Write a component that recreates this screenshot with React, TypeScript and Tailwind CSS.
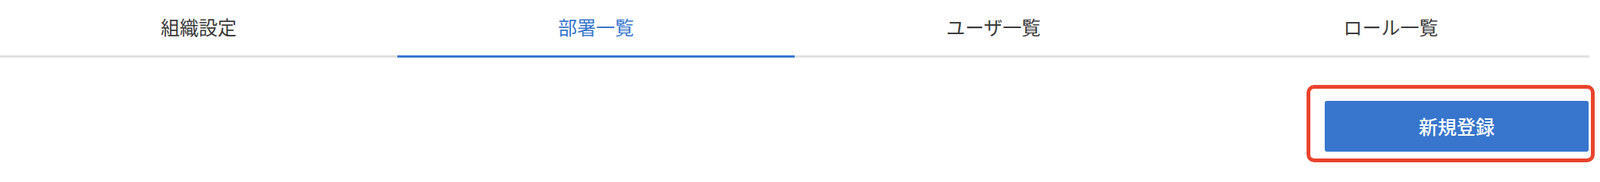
import React, { useState } from "react";

// Tabs shown across the top of the organisation settings page
const tabs = ["組織設定", "部署一覧", "ユーザ一覧", "ロール一覧"];

const App = () => {
  const [activeTab, setActiveTab] = useState(1);

  return (
    <div
      className="w-[2096px] bg-white"
      style={{ fontFamily: '"Noto Sans CJK JP", "Noto Sans", sans-serif' }}
    >
      {/* Tab bar */}
      <div className="grid grid-cols-4">
        {tabs.map((label, index) => {
          const isActive = index === activeTab;
          return (
            <button
              key={label}
              onClick={() => setActiveTab(index)}
              className={
                isActive
                  ? "pt-[17px] pb-[20px] text-[25px] leading-[36px] text-[#3876cd] border-b-[3px] border-[#3876cd]"
                  : "pt-[17px] pb-[20px] text-[25px] leading-[36px] text-[#3a3a3a] border-b-[3px] border-[#e0e0e0]"
              }
            >
              {label}
            </button>
          );
        })}
      </div>

      {/* Actions */}
      <div className="flex justify-end pt-[57px] pb-[26px] pr-px">
        <div className="relative">
          <button className="w-[348px] h-[67px] rounded-[3px] bg-[#3876cd] text-white text-[25px] font-medium">
            新規登録
          </button>
          {/* highlight box */}
          <div className="pointer-events-none absolute -left-[24px] -top-[21px] -right-[8px] -bottom-[14px] rounded-[10px] border-[5px] border-[#ea432c]"></div>
        </div>
      </div>
    </div>
  );
};

export default App;
